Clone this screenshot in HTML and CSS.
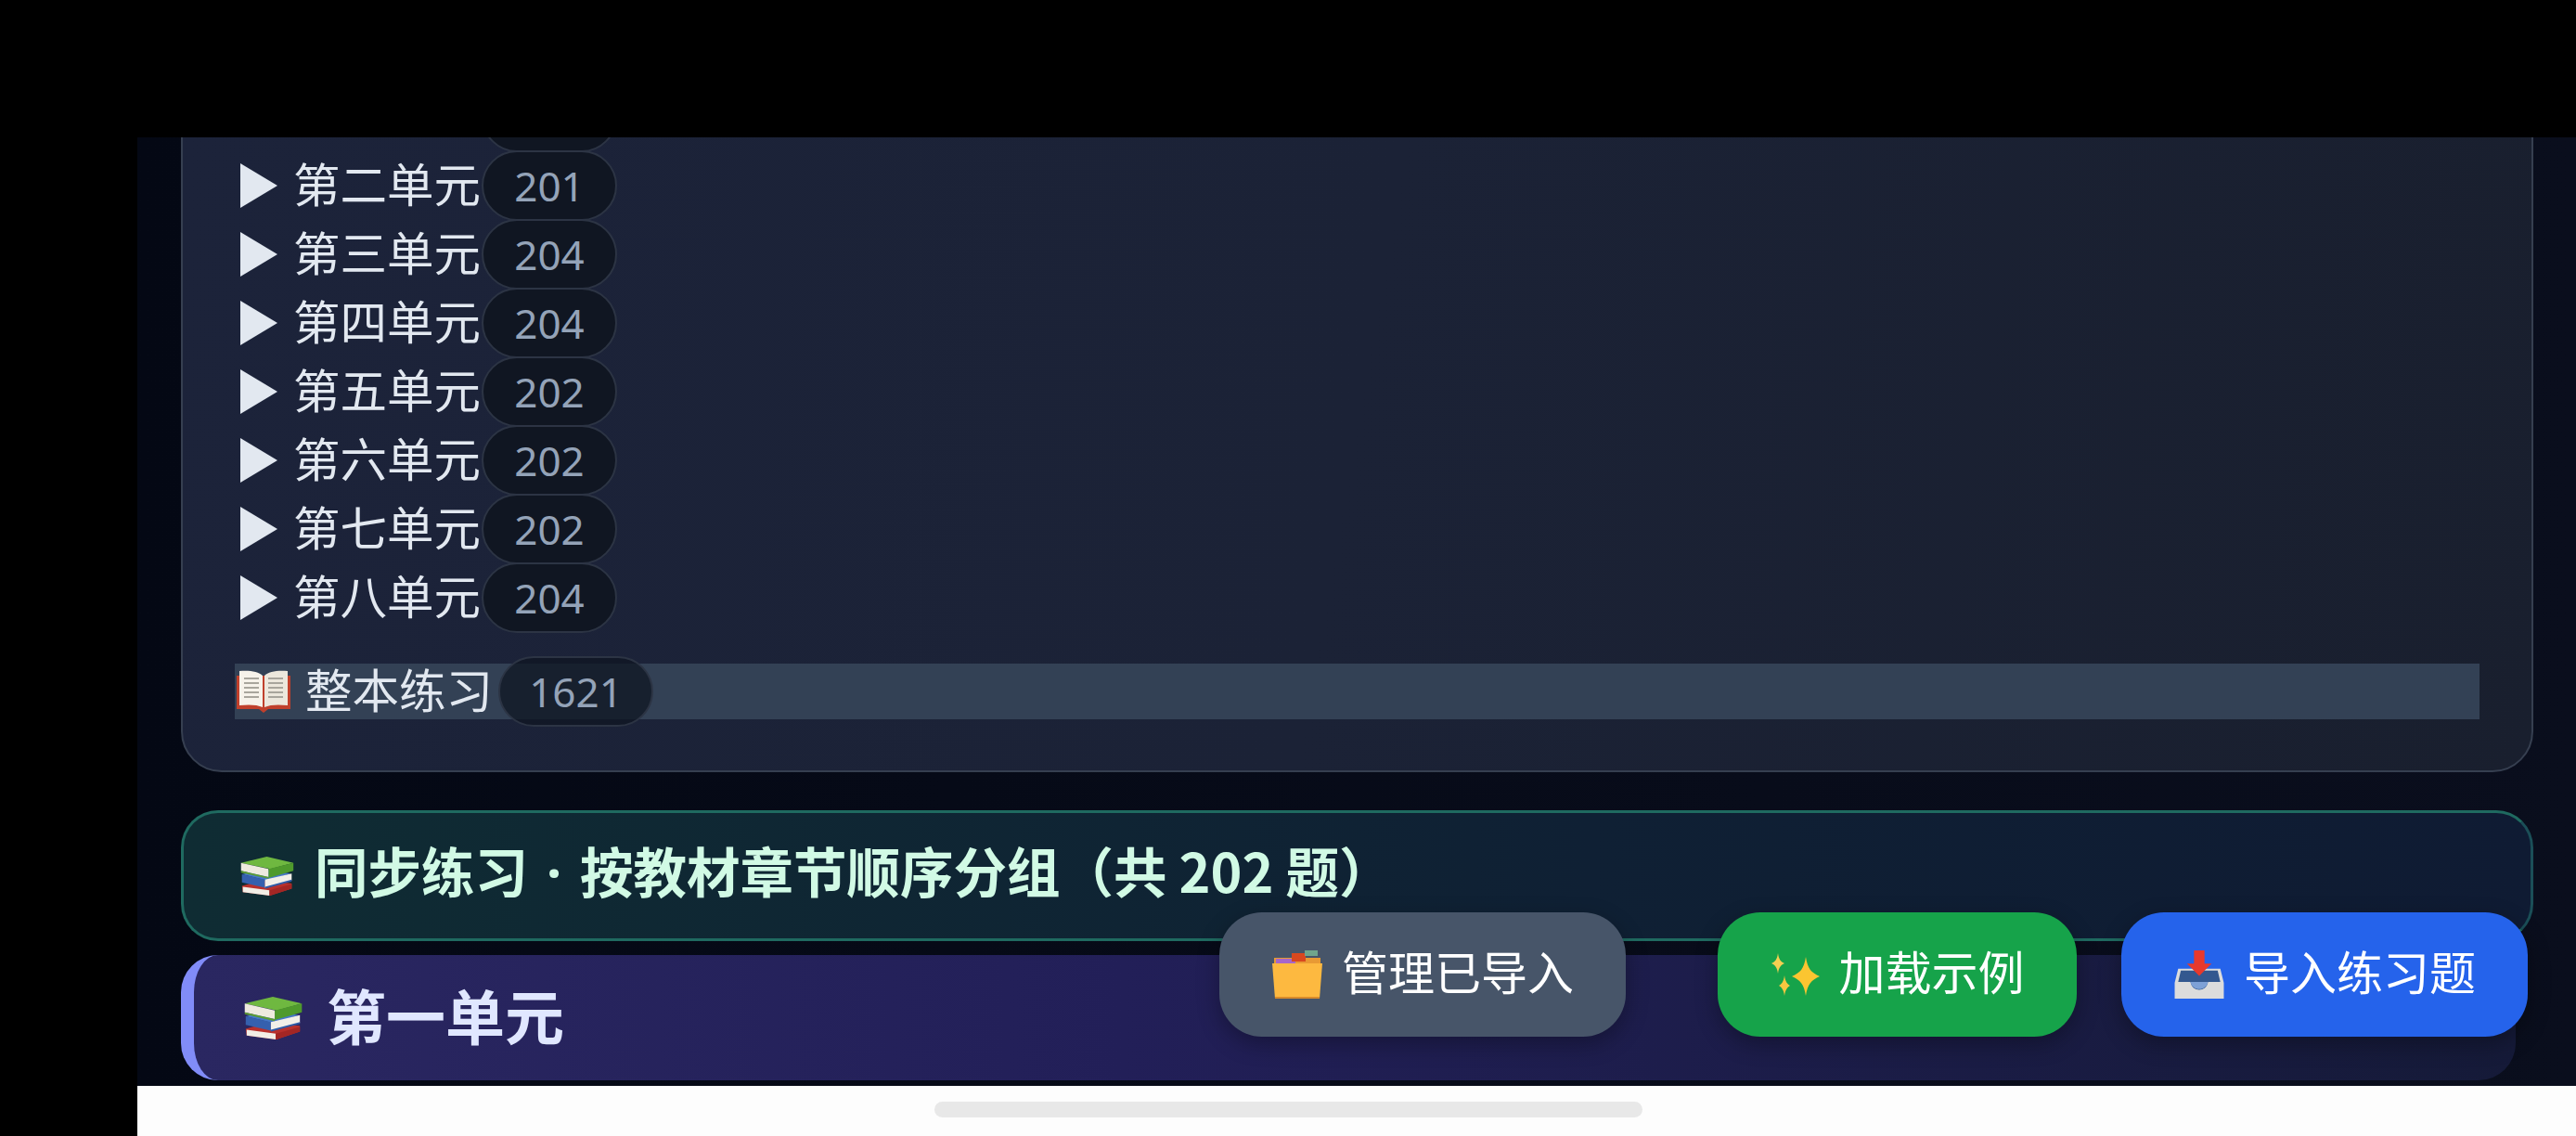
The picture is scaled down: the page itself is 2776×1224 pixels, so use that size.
FILE: index.html
```html
<!DOCTYPE html>
<html lang="zh-CN">
<head>
    <meta charset="UTF-8">
    <meta name="viewport" content="width=device-width, initial-scale=1.0">
    <title>同步练习</title>
    <link rel="stylesheet" href="styles.css">
</head>
<body>
    <svg class="defs" width="0" height="0">
        <symbol id="books" viewBox="0 0 64 46">
            <path d="M4 34 L26 28 L60 31 L60 37 L36 45 L5 41 Z" fill="#b8302c"/>
            <path d="M5 35 L35 39 L35 45 L5 41 Z" fill="#f2eee6"/>
            <path d="M35 39 L60 32 L60 37 L35 45 Z" fill="#a32624"/>
            <path d="M4 21 L28 15 L59 20 L32 28 Z" fill="#4577c8"/>
            <path d="M4 21 L30 27 L30 36 L4 30 Z" fill="#3560ae"/>
            <path d="M30 27 L60 20 L60 28 L30 36 Z" fill="#f2efe8"/>
            <path d="M30 35 L60 27 L60 29 L30 37 Z" fill="#2e5aa6"/>
            <path d="M3 8 L32 1 L62 8 L36 15 Z" fill="#6fb840"/>
            <path d="M3 8 L34 15 L34 24 L3 17 Z" fill="#eeeadf"/>
            <path d="M3 17 L34 24 L34 26 L3 19 Z" fill="#5c9c33"/>
            <path d="M34 15 L62 8 L62 17 L34 25 Z" fill="#4f9a2c"/>
        </symbol>
        <symbol id="openbook" viewBox="0 0 58 46">
            <path d="M0 6 L0 42 L24 42 L29 46 L34 42 L58 42 L58 6 Z" fill="#c0402c"/>
            <path d="M3 1 C12 0 24 1 28 6 L28 40 C22 37 12 37 3 38 Z" fill="#f6f2ea"/>
            <path d="M55 1 C46 0 34 1 30 6 L30 40 C36 37 46 37 55 38 Z" fill="#ece7dc"/>
            <path d="M8 9 H24 M8 14 H24 M8 19 H24 M8 24 H24 M8 29 H24 M34 9 H50 M34 14 H50 M34 19 H50 M34 24 H50 M34 29 H50" stroke="#a8a59c" stroke-width="2"/>
        </symbol>
        <symbol id="dividers" viewBox="0 0 56 52">
            <path d="M3 8 H53 V18 H3 Z" fill="#e89a34"/>
            <path d="M3 7 H24 V14 H3 Z" fill="#a766c9" transform="translate(2 2)"/>
            <rect x="22" y="3" width="15" height="9" fill="#d9481f"/>
            <rect x="36" y="0" width="14" height="6" fill="#6fa58c"/>
            <path d="M1 14 H55 L52 52 H4 Z" fill="#fdb940"/>
            <path d="M4 50 H52 L52 52 H4 Z" fill="#d98b2a"/>
        </symbol>
        <symbol id="sparkles" viewBox="0 0 54 46">
            <path d="M8 0 C9 7 11 9 15 11 C11 13 9 15 8 22 C7 15 5 13 1 11 C5 9 7 7 8 0 Z" fill="#f5cf52"/>
            <path d="M15 24 C16 31 18 33 21 35 C18 37 16 39 15 46 C14 39 12 37 9 35 C12 33 14 31 15 24 Z" fill="#f7c740"/>
            <path d="M38 4 C40 17 44 21 53 25 C44 29 40 33 38 46 C36 33 32 29 23 25 C32 21 36 17 38 4 Z" fill="#fbc531"/>
        </symbol>
        <symbol id="inbox" viewBox="0 0 56 55">
            <path d="M4 21 H52 L56 37 V55 H0 V37 Z" fill="#dcdcdc"/>
            <path d="M7 23 H49 L52 36 H38 C36 48 20 48 18 36 H4 Z" fill="#33588f"/>
            <path d="M18 36 C20 47 36 47 38 36 Z" fill="#7ea1d6"/>
            <path d="M22 0 H34 V15 H42 L28 29 L14 15 H22 Z" fill="#e8392c"/>
        </symbol>
    </svg>

    <div class="top-band"></div>

    <div class="stage">
        <div class="card">
            <div class="unit-row"><span class="arrow arrow-cut"></span><span class="unit-name"></span><span class="count"></span></div>
            <div class="unit-row"><span class="arrow"></span><span class="unit-name">第二单元</span><span class="count">201</span></div>
            <div class="unit-row"><span class="arrow"></span><span class="unit-name">第三单元</span><span class="count">204</span></div>
            <div class="unit-row"><span class="arrow"></span><span class="unit-name">第四单元</span><span class="count">204</span></div>
            <div class="unit-row"><span class="arrow"></span><span class="unit-name">第五单元</span><span class="count">202</span></div>
            <div class="unit-row"><span class="arrow"></span><span class="unit-name">第六单元</span><span class="count">202</span></div>
            <div class="unit-row"><span class="arrow"></span><span class="unit-name">第七单元</span><span class="count">202</span></div>
            <div class="unit-row"><span class="arrow"></span><span class="unit-name">第八单元</span><span class="count">204</span></div>
            <div class="whole-row">
                <svg class="icon-openbook"><use href="#openbook"/></svg>
                <span class="unit-name">整本练习</span>
                <span class="count count-wide">1621</span>
            </div>
        </div>

        <div class="sync-banner">
            <svg class="icon-books"><use href="#books"/></svg>
            <span class="sync-title">同步练习<span class="dot"> · </span>按教材章节顺序分组（共 202 题）</span>
        </div>

        <div class="unit-head">
            <svg class="icon-books-big"><use href="#books"/></svg>
            <span class="unit-title">第一单元</span>
        </div>
    </div>

    <div class="bottom-bar"><div class="handle"></div></div>

    <div class="actions">
        <button class="btn btn-manage"><svg class="icon-btn"><use href="#dividers"/></svg><span class="btn-text">管理已导入</span></button>
        <button class="btn btn-sample"><svg class="icon-btn icon-spark"><use href="#sparkles"/></svg><span class="btn-text">加载示例</span></button>
        <button class="btn btn-import"><svg class="icon-btn"><use href="#inbox"/></svg><span class="btn-text">导入练习题</span></button>
    </div>
</body>
</html>
```

FILE: styles.css
```css
html, body {
    margin: 0;
    padding: 0;
}
body {
    width: 2776px;
    height: 1224px;
    background: #000000;
    font-family: "Noto Sans CJK SC", "Noto Sans", sans-serif;
    color: #e2e8f0;
    overflow: hidden;
    position: relative;
}
.defs {
    display: none;
}
.top-band {
    height: 148px;
}
.stage {
    height: 1022px;
    margin-left: 148px;
    overflow: hidden;
    background: linear-gradient(90deg, #040814 0, #0a0e1d 100%);
}
.card {
    margin: -100px 46px 0 47px;
    padding: 39px 56px 55px 56px;
    border: 2px solid #363f50;
    border-radius: 44px;
    background: linear-gradient(100deg, #1c233a 0%, #1b2236 50%, #191f2e 100%);
}
.unit-row {
    display: flex;
    align-items: center;
    height: 74px;
}
.arrow {
    width: 40px;
    height: 48px;
    margin: 0 17px 0 6px;
    background: #e2e8f0;
    clip-path: polygon(0 0, 100% 50%, 0 100%);
}
.arrow-cut {
    visibility: hidden;
}
.unit-name {
    box-sizing: border-box;
    width: 202px;
    height: 69px;
    padding-bottom: 9px;
    font-size: 50.5px;
    line-height: 60px;
    white-space: nowrap;
}
.count {
    box-sizing: border-box;
    width: 146px;
    height: 76px;
    margin-left: 1px;
    border: 2px solid #2c3444;
    border-radius: 38px;
    background: #101622;
    color: #94a3b8;
    font-family: "Noto Sans", sans-serif;
    font-size: 44px;
    line-height: 72px;
    text-align: center;
}
.whole-row {
    display: flex;
    align-items: center;
    height: 60px;
    margin-top: 34px;
    background: #334155;
}
.icon-openbook {
    width: 58px;
    height: 46px;
    margin: 0 16px 0 2px;
}
.count-wide {
    width: 167px;
    margin-left: 6px;
    background: rgba(15, 21, 33, 0.75);
}
.sync-banner {
    display: flex;
    align-items: center;
    box-sizing: border-box;
    height: 141px;
    margin: 41px 46px 0 47px;
    padding-left: 58px;
    border: 3px solid #1f6a60;
    border-right-color: #1b4f58;
    border-radius: 40px;
    background: linear-gradient(90deg, #0f2c33 0%, #0f2034 60%, #0f1b33 100%);
    color: #d1fae5;
    font-size: 57.5px;
    font-weight: 700;
    white-space: nowrap;
}
.sync-title {
    padding-bottom: 14px;
}
.dot {
    font-family: "Noto Sans", sans-serif;
    font-weight: 700;
    word-spacing: 5px;
}
.icon-books {
    width: 63px;
    height: 44px;
    margin-right: 20px;
}
.unit-head {
    display: flex;
    align-items: center;
    box-sizing: border-box;
    height: 135px;
    margin: 15px 65px 0 47px;
    padding-left: 49px;
    border-left: 14px solid #818cf8;
    border-radius: 40px;
    background: linear-gradient(90deg, #2a2761 0%, #221f58 40%, #151a38 100%);
    color: #e0e7ff;
    font-size: 64px;
    font-weight: 700;
}
.unit-title {
    padding-bottom: 10px;
}
.icon-books-big {
    width: 72px;
    height: 48px;
    margin-right: 22px;
}
.bottom-bar {
    display: flex;
    justify-content: center;
    box-sizing: border-box;
    height: 54px;
    margin-left: 148px;
    padding-top: 17px;
    background: #fdfdfd;
}
.handle {
    width: 763px;
    height: 17px;
    margin-right: 148px;
    border-radius: 9px;
    background: #e8e8e8;
}
/* 浮动按钮 */
.actions {
    position: absolute;
    top: 983px;
    right: 52px;
    display: flex;
    gap: 48px;
}
.btn {
    display: flex;
    align-items: center;
    justify-content: center;
    box-sizing: border-box;
    width: 438px;
    height: 134px;
    padding: 0;
    border: none;
    border-radius: 46px;
    color: #ffffff;
    font-family: inherit;
    font-size: 50px;
    box-shadow: 0 8px 24px rgba(0, 0, 0, 0.3);
}
.btn-text {
    padding-bottom: 10px;
}
.icon-btn {
    width: 56px;
    height: 52px;
    margin-right: 20px;
}
.icon-spark {
    width: 54px;
    height: 46px;
}
.btn-manage {
    margin-right: 51px;
    background: #475569;
}
.btn-sample {
    width: 387px;
    background: #16a34a;
}
.btn-import {
    background: #2563eb;
}
```
